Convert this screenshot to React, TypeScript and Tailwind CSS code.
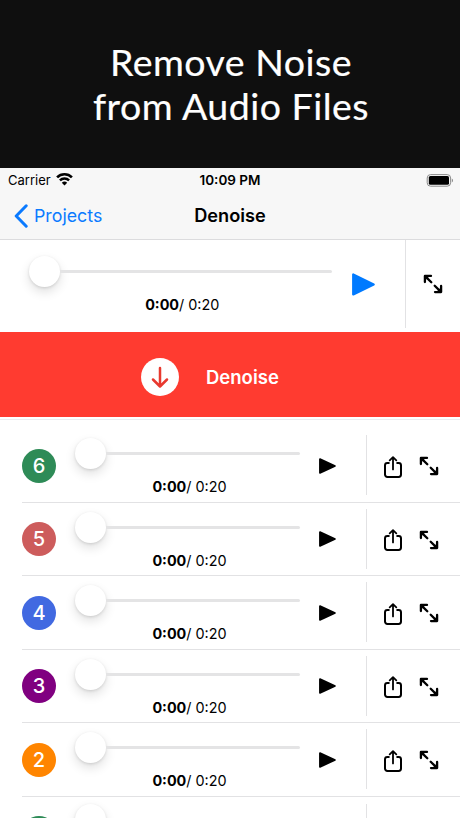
import { clsx } from 'clsx';

type Track = {
  id: number;
  color: string;
};

const TRACKS: Track[] = [
  { id: 6, color: 'bg-[#2e8b57]' },
  { id: 5, color: 'bg-[#cd5c5c]' },
  { id: 4, color: 'bg-[#4169e1]' },
  { id: 3, color: 'bg-[#800080]' },
  { id: 2, color: 'bg-[#ff8500]' },
];

function WifiIcon() {
  return (
    <svg width="17" height="13" viewBox="0 0 17 13" fill="none" stroke="#000">
      <path d="M1.1 4.4a10.4 10.4 0 0 1 14.8 0" strokeWidth="2.6" />
      <path d="M3.9 7.4a6.5 6.5 0 0 1 9.2 0" strokeWidth="2.4" />
      <path d="M8.5 12.5 5.8 9.8a3.8 3.8 0 0 1 5.4 0z" fill="#000" stroke="none" />
    </svg>
  );
}

function BatteryIcon() {
  return (
    <svg width="28" height="13" viewBox="0 0 28 13">
      <rect x="1.2" y="0.6" width="23.4" height="11.6" rx="3.4" fill="none" stroke="#8a8a8a" />
      <rect x="2.8" y="2" width="20.2" height="8.8" rx="1.6" fill="#000" />
      <path d="M25.8 4.4c1.6.5 1.6 3.5 0 4z" fill="#8a8a8a" />
    </svg>
  );
}

function PlayIcon({ className }: { className: string }) {
  return (
    <svg viewBox="0 0 24 24" preserveAspectRatio="none" className={className}>
      <path
        d="M1.3 1.6v20.8L22.6 12z"
        fill="currentColor"
        stroke="currentColor"
        strokeWidth="2.4"
        strokeLinejoin="round"
      />
    </svg>
  );
}

function ExpandIcon() {
  return (
    <svg
      width="20"
      height="20"
      viewBox="0 0 20 20"
      fill="none"
      stroke="#000"
      strokeWidth="2.3"
      strokeLinecap="round"
      strokeLinejoin="round"
    >
      <path d="M1.9 8V1.9H8M2.6 2.6l5.7 5.7" />
      <path d="M18.1 12v6.1H12M17.4 17.4l-5.7-5.7" />
      <path d="M2.5 2.5h3.2L2.5 5.7zM17.5 17.5h-3.2l3.2-3.2z" fill="#000" strokeWidth="1" />
    </svg>
  );
}

function ShareIcon() {
  return (
    <svg
      width="18"
      height="22"
      viewBox="0 0 18 22"
      fill="none"
      stroke="#000"
      strokeWidth="2"
      strokeLinecap="round"
      strokeLinejoin="round"
    >
      <path d="M4.8 6.9H3.4A2.4 2.4 0 0 0 1 9.3v9.2a2.4 2.4 0 0 0 2.4 2.4h11.2a2.4 2.4 0 0 0 2.4-2.4V9.3a2.4 2.4 0 0 0-2.4-2.4h-1.4" />
      <path d="M9 13.4V1.4M5.7 4.3 9 1.1l3.3 3.2" strokeWidth="1.8" />
    </svg>
  );
}

function Slider() {
  return (
    <div className="flex h-[31px] items-center">
      <span className="size-[31px] shrink-0 rounded-full bg-white shadow-[0_5px_11px_rgba(0,0,0,0.12),0_1px_3px_rgba(0,0,0,0.12)]" />
      <span className="h-[3px] flex-1 rounded-r-full bg-[#e4e4e5]" />
    </div>
  );
}

/** Slider with the elapsed / total time below it. */
function Player({ className }: { className: string }) {
  return (
    <div className={clsx('flex flex-col', className)}>
      <Slider />
      <div className="mt-[8px] pl-1 text-center text-[14.4px] leading-5">
        <b className="font-bold">0:00</b>/ 0:20
      </div>
    </div>
  );
}

function TrackRow({ track }: { track: Track }) {
  return (
    <div className="ml-[22px] flex h-[73.5px] shrink-0 items-center border-b border-[#e2e2e4]">
      <span
        className={clsx(
          'mt-px flex size-[34px] items-center justify-center rounded-full text-[20px] font-medium text-white',
          track.color,
        )}
      >
        {track.id}
      </span>
      <Player className="ml-[19px] w-[225px] pt-[5px]" />
      <PlayIcon className="mt-px ml-[19px] h-4 w-[17px]" />
      <span className="ml-[30px] h-[60px] w-px bg-[#e2e2e4]" />
      <span className="mt-[3px] ml-[17px]">
        <ShareIcon />
      </span>
      <span className="mt-[2px] ml-[17px]">
        <ExpandIcon />
      </span>
    </div>
  );
}

export default function App() {
  return (
    <div className="flex h-[818px] w-[460px] flex-col overflow-hidden bg-white font-['Inter',sans-serif] text-black">
      <header className="h-[168px] shrink-0 bg-[#0f0f0f] pt-[40px] pl-[2px] text-center font-['Lato',sans-serif] text-[37.5px] leading-[44px] tracking-[0.5px] text-white [-webkit-text-stroke:0.2px_white]">
        Remove Noise
        <br />
        from Audio Files
      </header>

      <div className="h-[72px] shrink-0 border-b border-[#dcdcde] bg-[#f7f7f7]">
        <div className="grid h-6 grid-cols-3 items-center pr-[6px] pl-2 text-[13px]">
          <div className="flex items-center gap-[5px]">
            <span className="pt-px">Carrier</span>
            <span className="-mt-px">
              <WifiIcon />
            </span>
          </div>
          <div className="pt-px pr-[2px] text-center text-[13.5px] font-semibold">10:09 PM</div>
          <div className="flex justify-end">
            <BatteryIcon />
          </div>
        </div>
        <div className="grid h-[47px] grid-cols-3 items-center px-[14px] text-[18px]">
          <div className="flex items-center gap-[6px] text-[#0a7aff]">
            <svg width="14" height="24" viewBox="0 0 14 24" fill="none" stroke="currentColor" strokeWidth="3">
              <path d="M12.2 1.8 2.2 12l10 10.2" strokeLinecap="round" strokeLinejoin="round" />
            </svg>
            <span className="pt-px text-[17.8px]">Projects</span>
          </div>
          <div className="text-center text-[18.2px] font-semibold">Denoise</div>
        </div>
      </div>

      <div className="flex h-[92px] shrink-0 items-center pl-[28.5px]">
        <Player className="-mt-[2px] w-[303.5px]" />
        <PlayIcon className="-mt-[4px] ml-5 h-[23px] w-[23px] text-[#007aff]" />
        <span className="ml-[30px] h-[88px] w-px self-start bg-[#e2e2e4]" />
        <span className="-mt-[4px] ml-[17px]">
          <ExpandIcon />
        </span>
      </div>

      <div className="flex h-[85px] shrink-0 items-center bg-[#ff3b30] pt-[5px] pl-[141px] text-white">
        <svg width="38" height="38" viewBox="0 0 38 38" fill="none">
          <circle cx="19" cy="19" r="19" fill="#fff" />
          <path
            d="M19 10v18M12 21.5l7 7 7-7"
            stroke="#e8392f"
            strokeWidth="2.5"
            strokeLinecap="round"
            strokeLinejoin="round"
          />
        </svg>
        <span className="ml-[27px] pt-px text-[18.5px] font-semibold">Denoise</span>
      </div>

      <div className="mt-[2px] flex flex-col border-t border-[#ececee] pt-[9px]">
        {TRACKS.map((track) => (
          <TrackRow key={track.id} track={track} />
        ))}
        {/* next row, only its top edge is scrolled into view */}
        <div className="ml-[22px] flex h-[21px] shrink-0 overflow-hidden">
          <span className="mt-[19px] size-[34px] shrink-0 rounded-full bg-[#2e8b57]" />
          <div className="ml-[19px] w-[225px] pt-[7px]">
            <Slider />
          </div>
          <span className="mt-[7px] ml-[66px] h-[60px] w-px bg-[#e2e2e4]" />
        </div>
      </div>
    </div>
  );
}
